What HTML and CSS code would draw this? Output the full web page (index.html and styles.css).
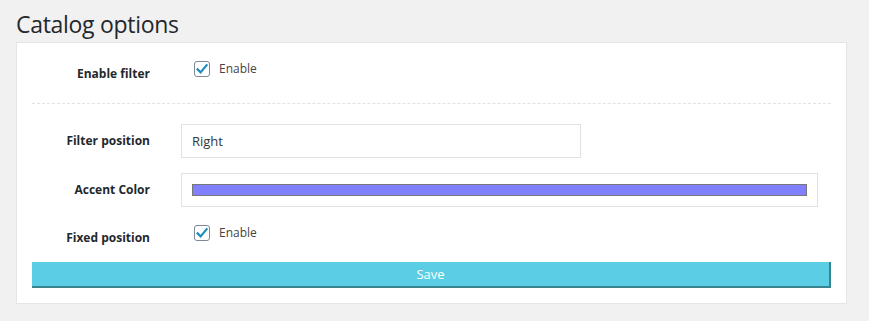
FILE: index.html
```html
<!DOCTYPE html>
<html lang="en">
<head>
	<meta charset="UTF-8">
	<title>Catalog options</title>
	<link rel="stylesheet" href="styles.css">
</head>
<body>
	<div class="wrap">
		<h2 class="title">Catalog options</h2>

		<div class="panel">
			<form action="">
				<div class="row row-first">
					<span class="label">Enable filter</span>
					<label class="check">
						<span class="box">
							<svg width="16" height="16" viewBox="0 0 16 16"><path d="M3.6 8.4 L6.6 11.4 L12.6 4.2" fill="none" stroke="#1e8cbe" stroke-width="2.2" stroke-linecap="square"/></svg>
						</span>
						Enable
					</label>
				</div>

				<div class="row row-input">
					<span class="label">Filter position</span>
					<div class="field field-short">Right</div>
				</div>

				<div class="row row-input row-color">
					<span class="label">Accent Color</span>
					<div class="field field-long"><span class="swatch"></span></div>
				</div>

				<div class="row row-check">
					<span class="label">Fixed position</span>
					<label class="check">
						<span class="box">
							<svg width="16" height="16" viewBox="0 0 16 16"><path d="M3.6 8.4 L6.6 11.4 L12.6 4.2" fill="none" stroke="#1e8cbe" stroke-width="2.2" stroke-linecap="square"/></svg>
						</span>
						Enable
					</label>
				</div>

				<a href="javascript:void(0);" class="save">Save</a>
			</form>
		</div>
	</div>
</body>
</html>
```
FILE: styles.css
```css
body{
	margin: 0;
	background: #f1f1f1;
	font-family: 'Open Sans', 'Noto Sans', sans-serif;
	color: #23282d;
}
.wrap{
	padding: 0 22px 0 16px;
}
.title{
	margin: 0;
	padding-top: 11px;
	height: 42px;
	box-sizing: border-box;
	font-size: 23px;
	line-height: 26px;
	font-weight: 400;
	letter-spacing: -0.3px;
	color: #23282d;
}
.panel{
	background: #fff;
	border: 1px solid #e5e5e5;
	padding: 0 15px 15px;
}
.row{
	display: flex;
}
.label{
	width: 118px;
	flex: none;
	text-align: right;
	font-size: 12px;
	font-weight: 700;
	line-height: 20px;
	color: #23282d;
}
.row-first{
	height: 61px;
	padding-top: 18px;
	box-sizing: border-box;
	border-bottom: 1px dashed #e2e2e2;
}
.row-first .label,
.row-check .label{
	margin-top: 3px;
}
.check{
	display: flex;
	align-items: flex-start;
	margin-left: 44px;
	font-size: 12px;
	line-height: 16px;
	color: #444;
}
.box{
	width: 14px;
	height: 14px;
	border: 1px solid #7e8993;
	border-radius: 3px;
	margin-right: 9px;
	position: relative;
}
.box svg{
	position: absolute;
	left: -1px;
	top: -1px;
}
.row-input{
	align-items: center;
	margin-top: 20px;
}
.row-color{
	margin-top: 15px;
}
.field{
	margin-left: 31px;
	height: 34px;
	box-sizing: border-box;
	border: 1px solid #e2e2e2;
	background: #fff;
}
.field-short{
	width: 400px;
	padding-left: 10px;
	font-size: 13px;
	line-height: 32px;
	color: #32373c;
}
.field-long{
	width: 637px;
	padding: 10px 10px 0;
}
.swatch{
	display: block;
	height: 12px;
	background: #8080ff;
	border: 1px solid #777;
	box-sizing: border-box;
}
.row-check{
	margin-top: 18px;
}
.save{
	display: block;
	margin-top: 14px;
	height: 26px;
	box-sizing: border-box;
	background: #5bcde5;
	border-right: 2px solid #37848e;
	border-bottom: 2px solid #37848e;
	color: #fff;
	text-align: center;
	font-size: 13px;
	line-height: 24px;
	text-decoration: none;
}
```
